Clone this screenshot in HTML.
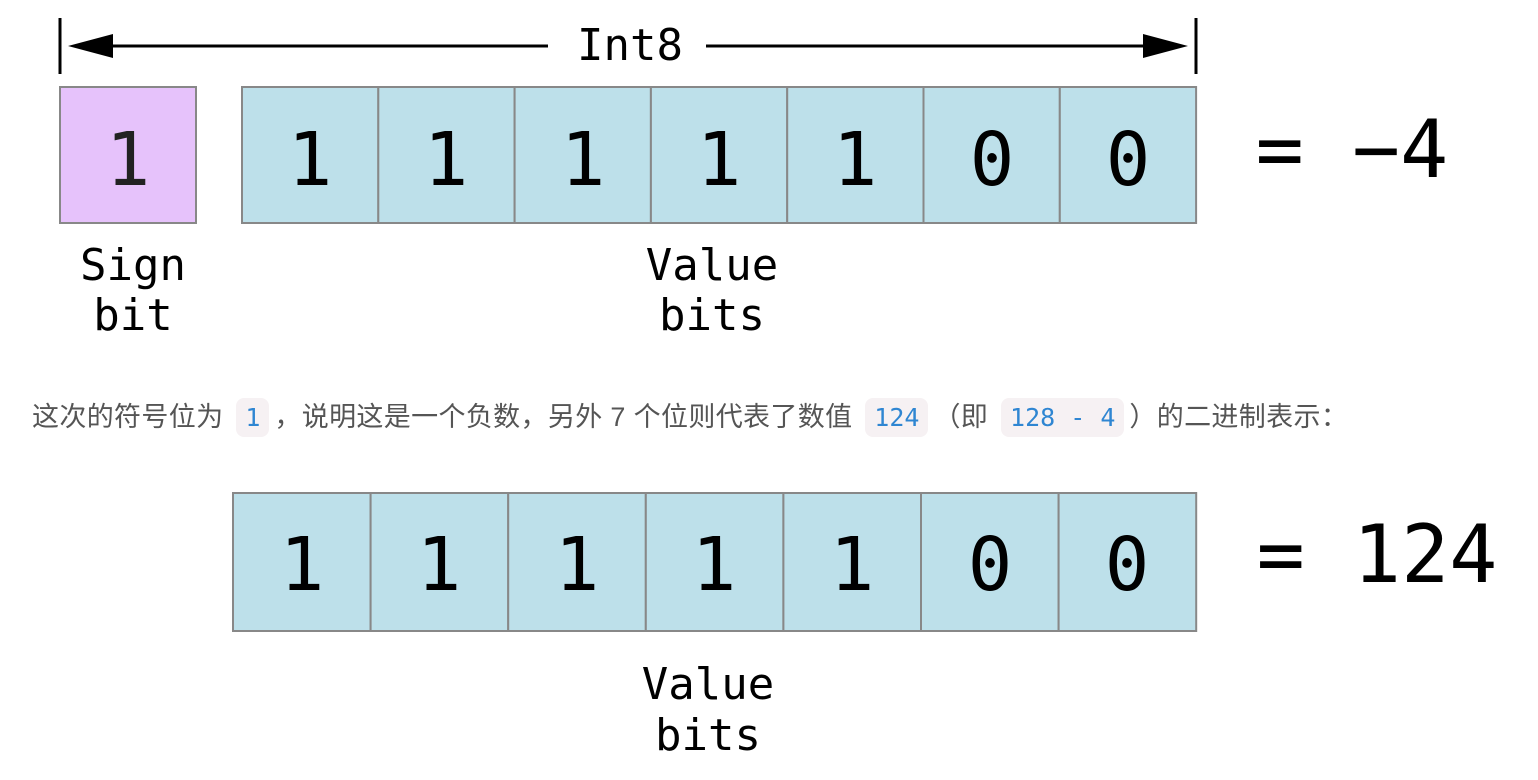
<!DOCTYPE html>
<html><head><meta charset="utf-8"><style>
html,body{margin:0;padding:0;background:#fff;width:1538px;height:780px;overflow:hidden;position:relative}
svg{position:absolute;left:0;top:0}
.p{position:absolute;left:32px;top:398px;font-family:"Liberation Sans","Noto Sans CJK SC",sans-serif;font-size:27px;color:#555;line-height:38px;white-space:nowrap;letter-spacing:0.35px}
.c{font-family:"DejaVu Sans Mono","Liberation Mono",monospace;color:#2f86d2;background:#f6f1f3;border-radius:8px;padding:5px 9px;font-size:25px;margin:0 5px;letter-spacing:0}
</style></head><body>
<svg width="1538" height="780" font-family="DejaVu Sans Mono, Liberation Mono, monospace">
<line x1="60" y1="18" x2="60" y2="74" stroke="#000" stroke-width="3"/>
<line x1="1196" y1="18" x2="1196" y2="74" stroke="#000" stroke-width="3"/>
<line x1="100" y1="46" x2="548" y2="46" stroke="#000" stroke-width="3"/>
<line x1="706" y1="46" x2="1150" y2="46" stroke="#000" stroke-width="3"/>
<polygon points="68,46 113,34 113,58" fill="#000"/>
<polygon points="1188,46 1143,34 1143,58" fill="#000"/>
<text x="630" y="60" font-size="44" text-anchor="middle">Int8</text>
<rect x="60" y="87" width="136" height="136" fill="#e6c2fb" stroke="#888" stroke-width="2"/>
<text x="128" y="185" font-size="74" text-anchor="middle" fill="#222">1</text>
<g stroke="#888" stroke-width="2" fill="#bde0ea">
<rect x="242" y="87" width="136.3" height="136"/><rect x="378.3" y="87" width="136.3" height="136"/><rect x="514.6" y="87" width="136.3" height="136"/><rect x="650.9" y="87" width="136.3" height="136"/><rect x="787.2" y="87" width="136.3" height="136"/><rect x="923.5" y="87" width="136.3" height="136"/><rect x="1059.8" y="87" width="136.3" height="136"/>
</g>
<g font-size="74" text-anchor="middle">
<text x="310" y="185">1</text><text x="446" y="185">1</text><text x="583" y="185">1</text><text x="719" y="185">1</text><text x="855" y="185">1</text><text x="992" y="185">0</text><text x="1128" y="185">0</text>
</g>
<text x="1352" y="177" font-size="80" text-anchor="middle">= −4</text>
<g font-size="44" text-anchor="middle">
<text x="133" y="280">Sign</text><text x="133" y="330">bit</text>
<text x="712" y="280">Value</text><text x="712" y="330">bits</text>
<text x="708" y="699">Value</text><text x="708" y="750">bits</text>
</g>
<g stroke="#888" stroke-width="2" fill="#bde0ea">
<rect x="233" y="493" width="137.6" height="138"/><rect x="370.6" y="493" width="137.6" height="138"/><rect x="508.2" y="493" width="137.6" height="138"/><rect x="645.8" y="493" width="137.6" height="138"/><rect x="783.4" y="493" width="137.6" height="138"/><rect x="921" y="493" width="137.6" height="138"/><rect x="1058.6" y="493" width="137.6" height="138"/>
</g>
<g font-size="74" text-anchor="middle">
<text x="302" y="590">1</text><text x="439" y="590">1</text><text x="577" y="590">1</text><text x="714" y="590">1</text><text x="852" y="590">1</text><text x="990" y="590">0</text><text x="1127" y="590">0</text>
</g>
<text x="1377" y="582" font-size="80" text-anchor="middle">= 124</text>
</svg>
<div class="p">这次的符号位为 <span class="c">1</span>，说明这是一个负数，另外 7 个位则代表了数值 <span class="c">124</span>（即 <span class="c">128 - 4</span>）的二进制表示：</div>
</body></html>
